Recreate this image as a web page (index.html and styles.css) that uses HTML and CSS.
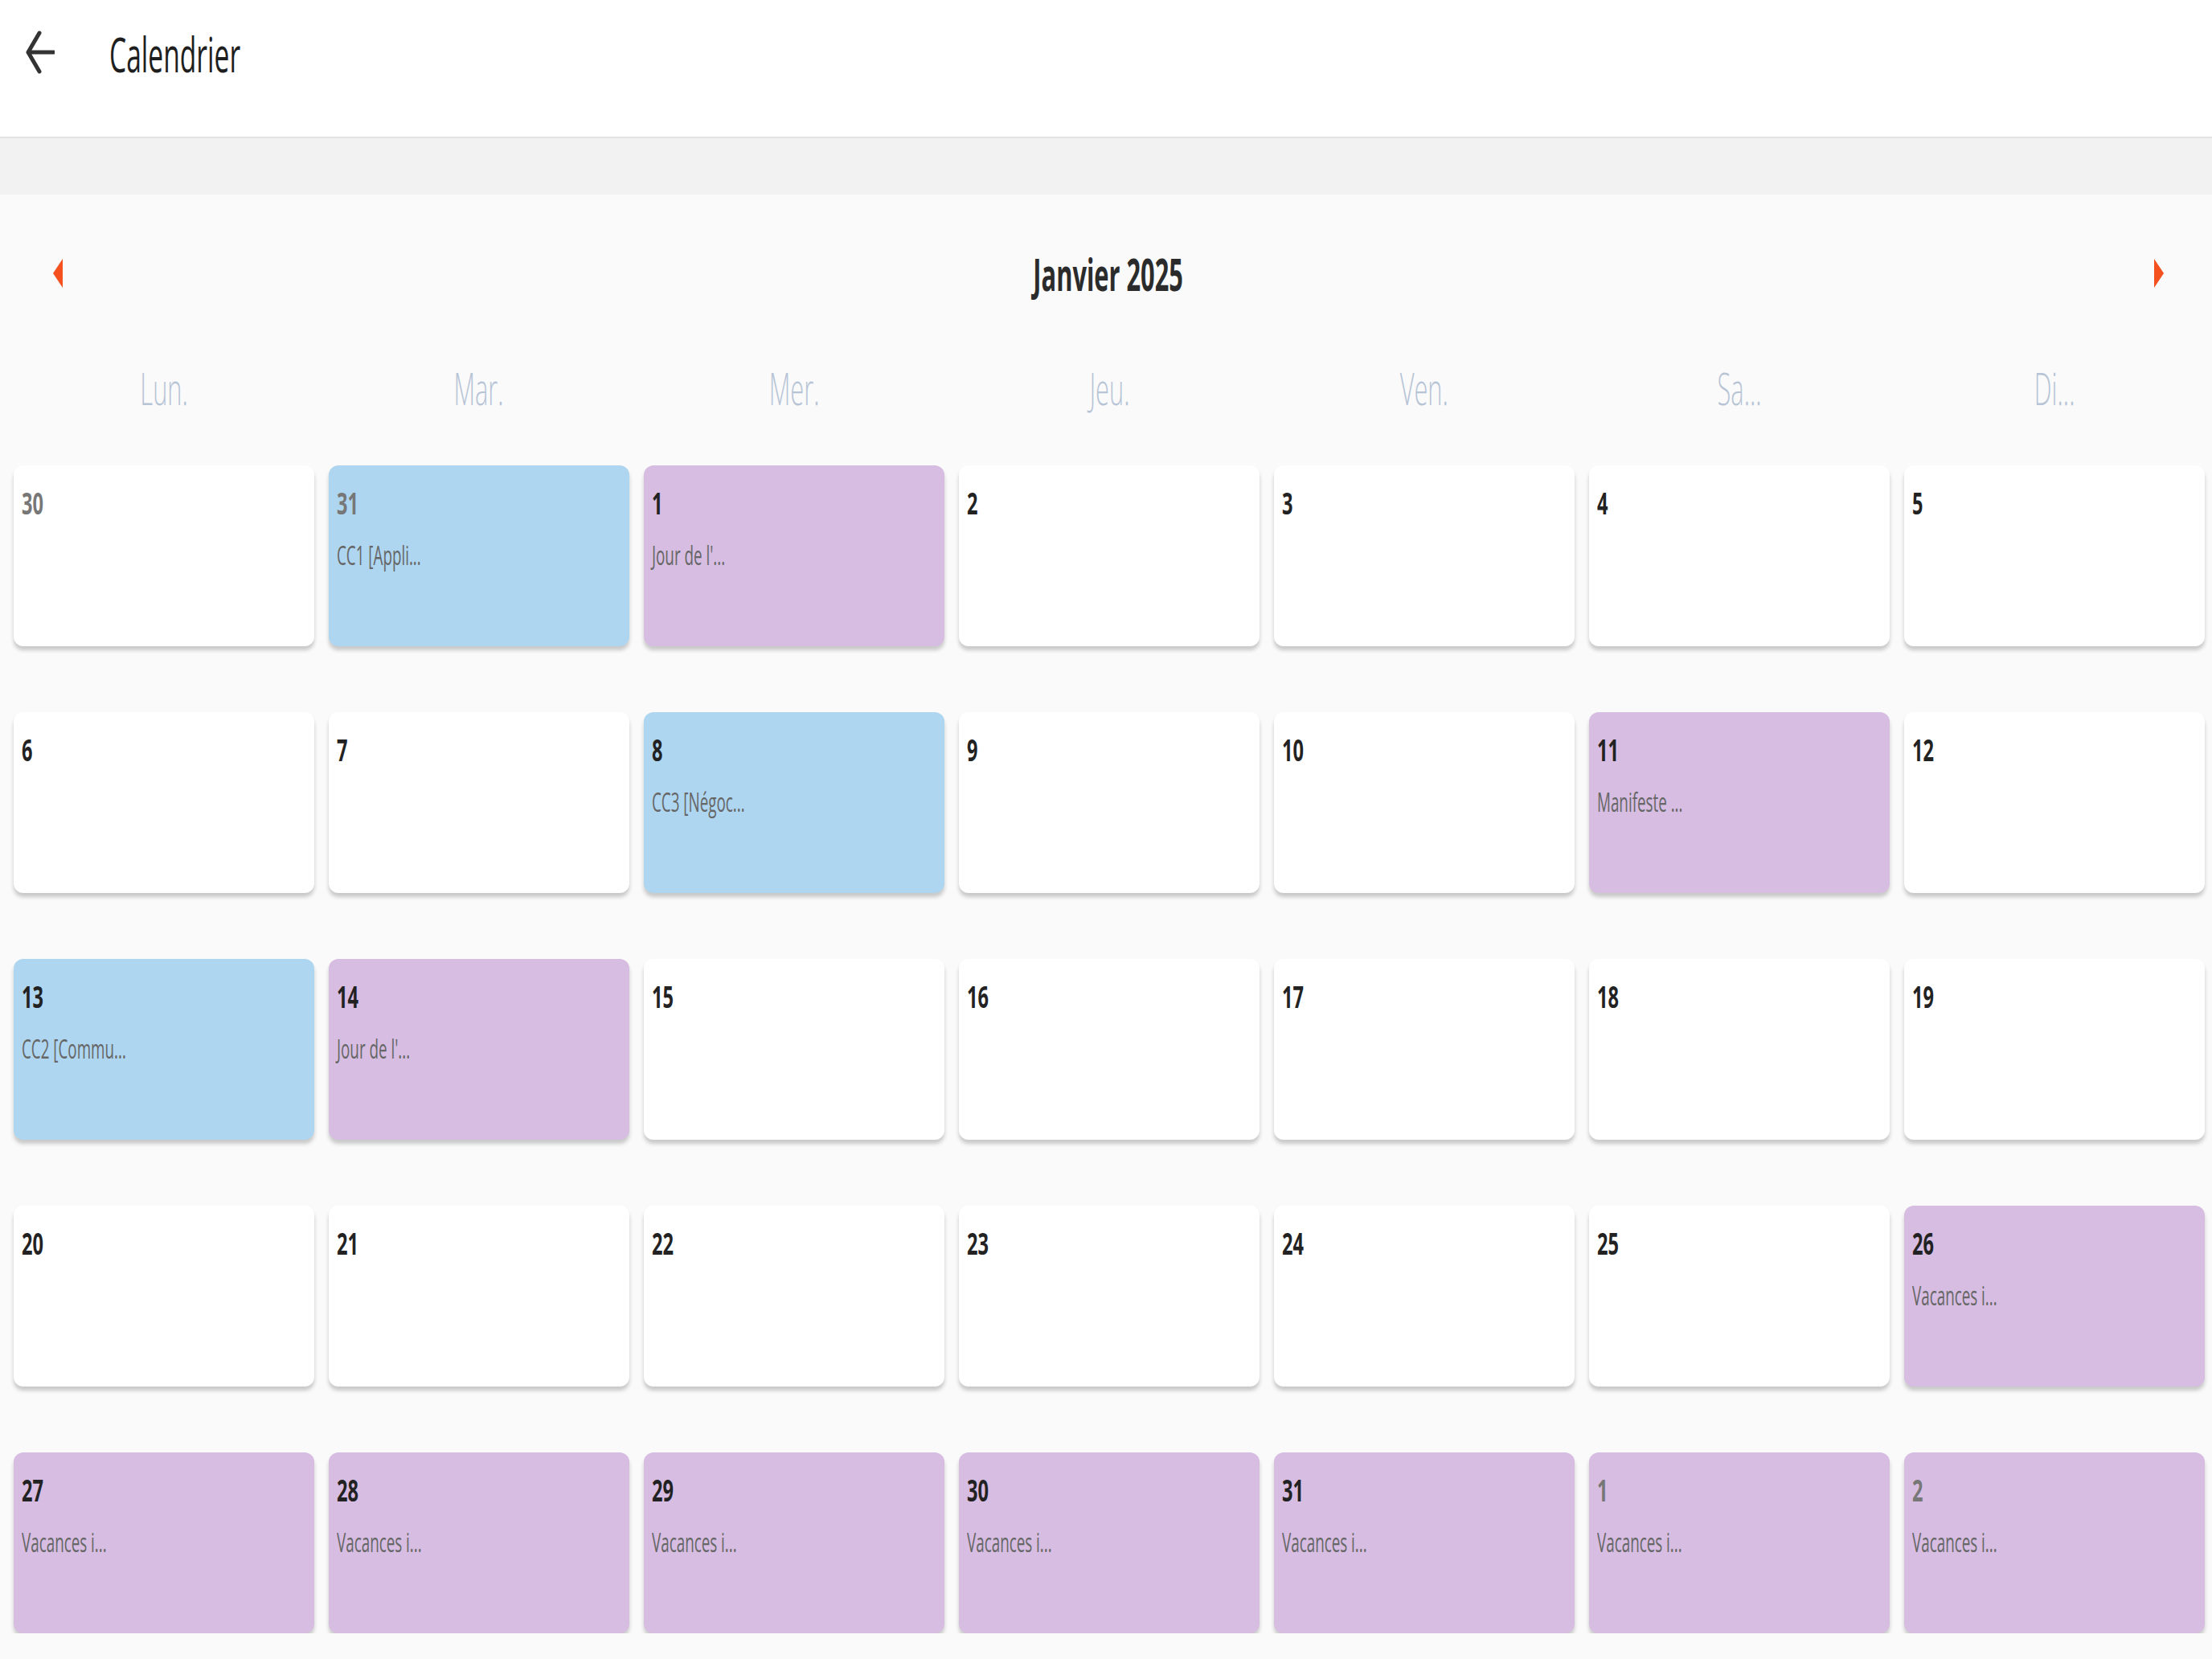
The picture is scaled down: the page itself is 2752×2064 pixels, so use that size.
FILE: index.html
```html
<!DOCTYPE html>
<html lang="fr">
<head>
    <meta charset="UTF-8">
    <meta name="viewport" content="width=device-width, initial-scale=1.0">
    <title>Calendrier</title>
    <link rel="stylesheet" href="styles.css">
</head>
<body>
    <header class="topbar">
        <button class="back-button" aria-label="Retour">
            <svg width="36" height="56" viewBox="0 0 36 56">
                <path d="M17 4 L3 28 L17 52 M3 28 H35" fill="none" stroke="#333" stroke-width="5" stroke-linecap="round" stroke-linejoin="round"/>
            </svg>
        </button>
        <h1 class="page-title"><span class="squeeze">Calendrier</span></h1>
    </header>
    <div class="band"></div>

    <main class="calendar">
        <div class="month-nav">
            <button class="nav-arrow prev" aria-label="Mois précédent"></button>
            <div class="month-title"><span class="squeeze">Janvier 2025</span></div>
            <button class="nav-arrow next" aria-label="Mois suivant"></button>
        </div>

        <div class="weekdays">
            <div class="weekday"><span class="squeeze">Lun.</span></div>
            <div class="weekday"><span class="squeeze">Mar.</span></div>
            <div class="weekday"><span class="squeeze">Mer.</span></div>
            <div class="weekday"><span class="squeeze">Jeu.</span></div>
            <div class="weekday"><span class="squeeze">Ven.</span></div>
            <div class="weekday"><span class="squeeze">Sa...</span></div>
            <div class="weekday"><span class="squeeze">Di...</span></div>
        </div>

        <div class="days">
            <!-- semaine 1 -->
            <div class="day other"><span class="day-num">30</span></div>
            <div class="day other exam"><span class="day-num">31</span><span class="event">CC1 [Appli...</span></div>
            <div class="day holiday"><span class="day-num">1</span><span class="event">Jour de l'...</span></div>
            <div class="day"><span class="day-num">2</span></div>
            <div class="day"><span class="day-num">3</span></div>
            <div class="day"><span class="day-num">4</span></div>
            <div class="day"><span class="day-num">5</span></div>
            <!-- semaine 2 -->
            <div class="day"><span class="day-num">6</span></div>
            <div class="day"><span class="day-num">7</span></div>
            <div class="day exam"><span class="day-num">8</span><span class="event">CC3 [Négoc...</span></div>
            <div class="day"><span class="day-num">9</span></div>
            <div class="day"><span class="day-num">10</span></div>
            <div class="day holiday"><span class="day-num">11</span><span class="event">Manifeste ...</span></div>
            <div class="day"><span class="day-num">12</span></div>
            <!-- semaine 3 -->
            <div class="day exam"><span class="day-num">13</span><span class="event">CC2 [Commu...</span></div>
            <div class="day holiday"><span class="day-num">14</span><span class="event">Jour de l'...</span></div>
            <div class="day"><span class="day-num">15</span></div>
            <div class="day"><span class="day-num">16</span></div>
            <div class="day"><span class="day-num">17</span></div>
            <div class="day"><span class="day-num">18</span></div>
            <div class="day"><span class="day-num">19</span></div>
            <!-- semaine 4 -->
            <div class="day"><span class="day-num">20</span></div>
            <div class="day"><span class="day-num">21</span></div>
            <div class="day"><span class="day-num">22</span></div>
            <div class="day"><span class="day-num">23</span></div>
            <div class="day"><span class="day-num">24</span></div>
            <div class="day"><span class="day-num">25</span></div>
            <div class="day holiday"><span class="day-num">26</span><span class="event">Vacances i...</span></div>
            <!-- semaine 5 -->
            <div class="day holiday"><span class="day-num">27</span><span class="event">Vacances i...</span></div>
            <div class="day holiday"><span class="day-num">28</span><span class="event">Vacances i...</span></div>
            <div class="day holiday"><span class="day-num">29</span><span class="event">Vacances i...</span></div>
            <div class="day holiday"><span class="day-num">30</span><span class="event">Vacances i...</span></div>
            <div class="day holiday"><span class="day-num">31</span><span class="event">Vacances i...</span></div>
            <div class="day other holiday"><span class="day-num">1</span><span class="event">Vacances i...</span></div>
            <div class="day other holiday"><span class="day-num">2</span><span class="event">Vacances i...</span></div>
        </div>
    </main>
</body>
</html>
```

FILE: styles.css
```css
body {
    margin: 0;
    padding: 0;
    font-family: "Open Sans", "Noto Sans", sans-serif;
    background-color: #fafafa;
    color: #222;
}
.squeeze {
    display: inline-block;
    white-space: nowrap;
    transform: scaleX(0.55);
    transform-origin: left center;
}
.topbar {
    height: 172px;
    box-sizing: border-box;
    display: flex;
    align-items: flex-start;
    padding: 37px 0 0 32px;
    background-color: #ffffff;
    border-bottom: 2px solid #e3e3e3;
}
.back-button {
    background: none;
    border: none;
    padding: 0;
    width: 36px;
    height: 56px;
    cursor: pointer;
}
.back-button svg {
    display: block;
}
.page-title {
    margin: 0 0 0 68px;
    font-size: 60px;
    font-weight: 400;
    line-height: 60px;
    color: #1e1e1e;
}
.page-title .squeeze {
    transform: scaleX(0.56);
}
.band {
    height: 70px;
    background-color: #f2f2f2;
}
.month-nav {
    display: flex;
    align-items: center;
    justify-content: space-between;
    height: 76px;
    margin-top: 60px;
    padding: 0 60px 0 66px;
}
.nav-arrow {
    width: 0;
    height: 0;
    padding: 0;
    background: none;
    border-top: 18px solid transparent;
    border-bottom: 18px solid transparent;
    cursor: pointer;
}
.nav-arrow.prev {
    border-left: none;
    border-right: 12px solid #f4511e;
}
.nav-arrow.next {
    border-right: none;
    border-left: 12px solid #f4511e;
}
.month-title {
    font-size: 56px;
    font-weight: 700;
    line-height: 56px;
    color: #2b2b2b;
    text-align: center;
}
.month-title .squeeze,
.weekday .squeeze {
    transform-origin: center center;
}
.weekdays,
.days {
    display: grid;
    grid-template-columns: repeat(7, 374px);
    column-gap: 18px;
    padding: 0 9px 0 17px;
}
.weekdays {
    margin-top: 76px;
    height: 56px;
}
.weekday {
    text-align: center;
    font-size: 56px;
    font-weight: 300;
    line-height: 56px;
    color: #b7c4d6;
}
.days {
    margin-top: 69px;
    grid-auto-rows: 225px;
    row-gap: 82px;
}
.day {
    display: flex;
    flex-direction: column;
    align-items: flex-start;
    padding: 27px 10px 0;
    background-color: #ffffff;
    border-radius: 12px;
    box-shadow: 0 5px 5px rgba(0, 0, 0, 0.2);
}
.day.exam {
    background-color: #aed6f1;
}
.day.holiday {
    background-color: #d7bde2;
}
.day-num {
    display: inline-block;
    font-size: 38px;
    font-weight: 700;
    line-height: 38px;
    color: #222;
    transform: scaleX(0.62);
    transform-origin: left center;
}
.day.other .day-num {
    color: #777;
}
.event {
    display: inline-block;
    margin-top: 30px;
    font-size: 33px;
    line-height: 33px;
    color: #666;
    white-space: nowrap;
    transform: scaleX(0.57);
    transform-origin: left center;
}
```
